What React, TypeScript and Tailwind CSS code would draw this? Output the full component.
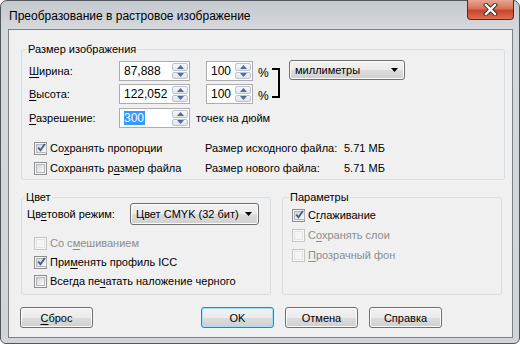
import type { ReactNode } from "react";

function U({ children }: { children: ReactNode }) {
  return <span className="underline underline-offset-[2px]">{children}</span>;
}

function Check({ checked, disabled }: { checked?: boolean; disabled?: boolean }) {
  return (
    <span
      className={`w-[13px] h-[13px] shrink-0 border p-[1px] flex ${
        disabled ? "border-[#c6c6c6] bg-[#f6f6f6]" : "border-[#8e8f8f] bg-[#f4f4f4]"
      }`}
    >
      <span
        className={`flex-1 flex items-center justify-center border ${
          disabled
            ? "border-[#e4e4e4] bg-[#f4f4f4]"
            : "border-[#b4b8be] bg-[linear-gradient(135deg,#d2d5da,#fbfbfb)]"
        }`}
      >
        {checked && (
          <svg width="9" height="9" viewBox="0 0 9 9" className="-mt-[1px]">
            <path d="M1.2 4.6 L3.5 7.2 L7.8 1" stroke="#4a5d93" strokeWidth="1.9" fill="none" />
          </svg>
        )}
      </span>
    </span>
  );
}

function CheckRow({
  children,
  checked,
  disabled,
}: {
  children: ReactNode;
  checked?: boolean;
  disabled?: boolean;
}) {
  return (
    <div className={`flex items-center gap-[3px] whitespace-nowrap ${disabled ? "text-[#8d8d8d]" : ""}`}>
      <Check checked={checked} disabled={disabled} />
      <span>{children}</span>
    </div>
  );
}

function Arrow({ up }: { up?: boolean }) {
  return (
    <svg width="7" height="4" viewBox="0 0 7 4">
      <path d={up ? "M0 4 L3.5 0 L7 4Z" : "M0 0 L3.5 4 L7 0Z"} fill="#4e6b9f" />
    </svg>
  );
}

function Spin() {
  return (
    <span className="w-[16px] flex flex-col py-[1px] mr-[1px] gap-[1px]">
      <span className="flex-1 border border-[#bcc5cf] rounded-[2px] bg-[linear-gradient(#f6f7f9,#e3e7ec)] flex items-center justify-center">
        <Arrow up />
      </span>
      <span className="flex-1 border border-[#bcc5cf] rounded-[2px] bg-[linear-gradient(#f1f3f5,#dfe4ea)] flex items-center justify-center">
        <Arrow />
      </span>
    </span>
  );
}

function NumField({ value, w, selected }: { value: string; w: string; selected?: boolean }) {
  return (
    <div className={`h-[20px] ${w} border border-[#abadb3] bg-white flex`}>
      <span className="flex-1 flex items-center pl-[4px] text-[12px]">
        {selected ? <span className="bg-[#3399ff] text-white pr-[1px]">{value}</span> : value}
      </span>
      <Spin />
    </div>
  );
}

function Combo({ text, cls }: { text: string; cls: string }) {
  return (
    <div
      className={`${cls} whitespace-nowrap border border-[#707070] rounded-[3px] bg-[linear-gradient(#f2f2f2,#ebebeb_50%,#dddddd_50%,#cfcfcf)] shadow-[inset_0_0_0_1px_#fbfbfb] flex items-center justify-between pl-[5px] pr-[6px]`}
    >
      <span>{text}</span>
      <svg width="7" height="4" viewBox="0 0 7 4">
        <path d="M0 0 L3.5 4 L7 0Z" fill="#000" />
      </svg>
    </div>
  );
}

function Btn({ children, ml, def }: { children: ReactNode; ml: string; def?: boolean }) {
  return (
    <div
      className={`${ml} w-[73px] h-[21px] rounded-[3px] border flex items-center justify-center bg-[linear-gradient(#f2f2f2,#ebebeb_50%,#dddddd_50%,#cfcfcf)] ${
        def
          ? "border-[#3c7fb1] shadow-[inset_0_0_0_1px_#9fe0f8]"
          : "border-[#707070] shadow-[inset_0_0_0_1px_#fbfbfb]"
      }`}
    >
      {children}
    </div>
  );
}

function SizeRow({ label, value, pct }: { label: ReactNode; value: string; pct: string }) {
  return (
    <div className="flex items-center h-[20px]">
      <span className="w-[90px]">{label}</span>
      <NumField value={value} w="w-[71px]" />
      <span className="ml-[16px]">
        <NumField value={pct} w="w-[47px]" />
      </span>
      <span className="ml-[5px] mt-[4px] w-[10px] text-[12px]">%</span>
    </div>
  );
}

export default function App() {
  return (
    <div className="w-[520px] h-[345px] bg-white font-['Liberation_Sans',Arial,sans-serif] text-[11px] leading-[14px] text-black">
      <div className="w-[520px] h-[344px] rounded-t-[7px] rounded-b-[6px] border border-[#50565c] bg-[linear-gradient(180deg,#c4cacf,#d5d8db_28px,#d2d5d8)] flex flex-col">
        <div className="h-[28px] flex items-start justify-between">
          <span className="ml-[8px] mt-[8px] text-[12px]">Преобразование в растровое изображение</span>
          <div className="-mt-[1px] mr-[5px] w-[47px] h-[20px] rounded-b-[4px] border border-t-0 border-[#5a2a20] bg-[linear-gradient(#e9a593,#d67357_45%,#c7452c_55%,#e0704f)] flex items-center justify-center">
            <svg width="15" height="13" viewBox="0 0 15 13">
              <path d="M3 2 L12 11 M12 2 L3 11" stroke="#3c2620" strokeWidth="4.2" strokeLinecap="square" />
              <path d="M3 2 L12 11 M12 2 L3 11" stroke="#ffffff" strokeWidth="2.4" strokeLinecap="square" />
            </svg>
          </div>
        </div>

        <div className="ml-[7px] w-[505px] h-[309px] border border-[#7b8187] bg-[#f0f0f0] flex flex-col">
          {/* Размер изображения */}
          <fieldset className="ml-[12px] mt-[12px] w-[484px] h-[138px] border border-[#d5dfe5] rounded-[3px]">
            <legend className="ml-[5px] px-[1px]">Размер изображения</legend>
            <div className="pl-[7px] pt-[5px] flex flex-col">
              <div className="flex items-start">
                <div className="flex flex-col gap-[3px]">
                  <SizeRow label={<><U>Ш</U>ирина:</>} value="87,888" pct="100" />
                  <SizeRow label={<><U>В</U>ысота:</>} value="122,052" pct="100" />
                </div>
                <div className="ml-[4px] mt-[7px] w-[8px] h-[30px] border-[2px] border-l-0 border-black" />
                <Combo text="миллиметры" cls="ml-[9px] -mt-[1px] w-[116px] h-[20px]" />
              </div>
              <div className="mt-[4px] flex items-center h-[20px]">
                <span className="w-[90px]">
                  <U>Р</U>азрешение:
                </span>
                <NumField value="300" w="w-[71px]" selected />
                <span className="ml-[6px] whitespace-nowrap">точек на дюйм</span>
              </div>
              <div className="mt-[13px] ml-[5px] grid grid-cols-[171px_139px_auto] gap-y-[6px] items-center whitespace-nowrap">
                <CheckRow checked>
                  Со<U>х</U>ранять пропорции
                </CheckRow>
                <span>Размер исходного файла:</span>
                <span>5.71 МБ</span>
                <CheckRow>
                  Сохранять р<U>а</U>змер файла
                </CheckRow>
                <span>Размер нового файла:</span>
                <span>5.71 МБ</span>
              </div>
            </div>
          </fieldset>

          <div className="mt-[10px] flex">
            {/* Цвет */}
            <fieldset className="ml-[12px] w-[250px] h-[105px] border border-[#d5dfe5] rounded-[3px]">
              <legend className="ml-[3px] px-[1px]">Цвет</legend>
              <div className="-mt-[1px] pl-[5px] flex flex-col">
                <div className="flex items-center">
                  <span className="w-[103px] whitespace-nowrap">
                    Цв<U>е</U>товой режим:
                  </span>
                  <Combo text="Цвет CMYK (32 бит)" cls="w-[129px] h-[22px]" />
                </div>
                <div className="mt-[11px] ml-[7px] flex flex-col gap-[5px]">
                  <CheckRow disabled>
                    Со с<U>м</U>ешиванием
                  </CheckRow>
                  <CheckRow checked>
                    При<U>м</U>енять профиль ICC
                  </CheckRow>
                  <CheckRow>
                    Всегда пе<U>ч</U>атать наложение черного
                  </CheckRow>
                </div>
              </div>
            </fieldset>

            {/* Параметры */}
            <fieldset className="ml-[11px] w-[220px] h-[105px] border border-[#d5dfe5] rounded-[3px]">
              <legend className="ml-[6px] px-[1px]">Параметры</legend>
              <div className="mt-[4px] pl-[9px] flex flex-col gap-[6px]">
                <CheckRow checked>
                  С<U>г</U>лаживание
                </CheckRow>
                <CheckRow disabled>
                  С<U>о</U>хранять слои
                </CheckRow>
                <CheckRow disabled>
                  <U>П</U>розрачный фон
                </CheckRow>
              </div>
            </fieldset>
          </div>

          <div className="mt-[12px] flex">
            <Btn ml="ml-[11px]">
              <U>С</U>брос
            </Btn>
            <Btn ml="ml-[108px]" def>
              OK
            </Btn>
            <Btn ml="ml-[11px]">Отмена</Btn>
            <Btn ml="ml-[11px]">Справка</Btn>
          </div>
        </div>
      </div>
    </div>
  );
}
